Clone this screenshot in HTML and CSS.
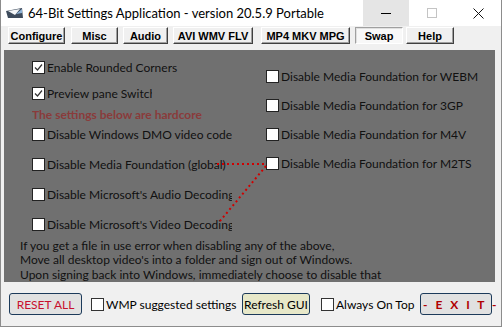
FILE: index.html
```html
<!DOCTYPE html>
<html lang="en">
<head>
    <meta charset="UTF-8">
    <title>64-Bit Settings Application</title>
    <link rel="stylesheet" href="styles.css">
</head>
<body>
    <div class="window">
        <!-- Title bar -->
        <div class="titlebar">
            <svg class="app-icon" width="18" height="12" viewBox="0 0 18 12">
                <polygon points="0,4 16,1 17,11 2,11" fill="#3d4b5c"/>
                <polygon points="2,4 14,2 9,8" fill="#f4f6f8"/>
                <polygon points="10,7 16,2 16,6" fill="#8fb4d8"/>
            </svg>
            <span class="title">64-Bit Settings Application - version 20.5.9 Portable</span>
            <div class="controls">
                <span class="ctl ctl-min"><svg width="10" height="10" viewBox="0 0 10 10"><line x1="0" y1="5.5" x2="10" y2="5.5" stroke="#000" stroke-width="1"/></svg></span>
                <span class="ctl"><svg width="10" height="10" viewBox="0 0 10 10"><rect x="0.5" y="0.5" width="9" height="9" fill="none" stroke="#c4c4c4" stroke-width="1"/></svg></span>
                <span class="ctl"><svg width="11" height="11" viewBox="0 0 11 11"><path d="M0.5 0.5 L10.5 10.5 M10.5 0.5 L0.5 10.5" stroke="#111" stroke-width="1"/></svg></span>
            </div>
        </div>

        <div class="client">
            <!-- Tab buttons -->
            <div class="tabs">
                <button class="tab tab-configure">Configure</button>
                <button class="tab tab-misc">Misc</button>
                <button class="tab tab-audio">Audio</button>
                <button class="tab tab-avi">AVI WMV FLV</button>
                <button class="tab tab-mp4">MP4 MKV MPG</button>
                <button class="tab tab-swap active">Swap</button>
                <button class="tab tab-help">Help</button>
            </div>

            <!-- Settings panel -->
            <div class="panel">
                <svg class="link-line" width="491" height="232" viewBox="0 0 491 232">
                    <path d="M213 114 L262 114 M262 116 L216 171" stroke="#d00000" stroke-width="2" stroke-dasharray="2 3" fill="none"/>
                </svg>
                <div class="cols">
                    <div class="col col-left">
                        <div class="row wide">
                            <span class="box"><svg width="11" height="11" viewBox="0 0 11 11"><path d="M2 5.5 L4.5 8 L9 2.5" stroke="#333" stroke-width="1.2" fill="none"/></svg></span>
                            <span class="label">Enable Rounded Corners</span>
                        </div>
                        <div class="row narrow near">
                            <span class="box"><svg width="11" height="11" viewBox="0 0 11 11"><path d="M2 5.5 L4.5 8 L9 2.5" stroke="#333" stroke-width="1.2" fill="none"/></svg></span>
                            <span class="label">Preview pane Switch</span>
                        </div>
                        <div class="row tight">
                            <span class="warn">The settings below are hardcore</span>
                        </div>
                        <div class="row wide flush">
                            <span class="box"></span>
                            <span class="label">Disable Windows DMO video codec</span>
                        </div>
                        <div class="row wide">
                            <span class="box"></span>
                            <span class="label">Disable Media Foundation (global)</span>
                        </div>
                        <div class="row wide">
                            <span class="box"></span>
                            <span class="label">Disable Microsoft's Audio Decoding</span>
                        </div>
                        <div class="row wide">
                            <span class="box"></span>
                            <span class="label">Disable Microsoft's Video Decoding</span>
                        </div>
                    </div>
                    <div class="col col-right">
                        <div class="row">
                            <span class="box"></span>
                            <span class="label">Disable Media Foundation for WEBM</span>
                        </div>
                        <div class="row">
                            <span class="box"></span>
                            <span class="label">Disable Media Foundation for 3GP</span>
                        </div>
                        <div class="row">
                            <span class="box"></span>
                            <span class="label">Disable Media Foundation for M4V</span>
                        </div>
                        <div class="row">
                            <span class="box"></span>
                            <span class="label">Disable Media Foundation for M2TS</span>
                        </div>
                    </div>
                </div>
                <div class="note">
                    <div>If you get a file in use error when disabling any of the above,</div>
                    <div>Move all desktop video's into a folder and sign out of Windows.</div>
                    <div>Upon signing back into Windows, immediately choose to disable that</div>
                </div>
            </div>

            <!-- Bottom bar -->
            <div class="footer">
                <button class="btn btn-reset">RESET ALL</button>
                <div class="check check-wmp">
                    <span class="box"></span>
                    <span class="label">WMP suggested settings</span>
                </div>
                <button class="btn btn-refresh">Refresh GUI</button>
                <div class="check check-top">
                    <span class="box"></span>
                    <span class="label">Always On Top</span>
                </div>
                <button class="btn btn-exit">- E X I T -</button>
            </div>
        </div>
    </div>
</body>
</html>
```

FILE: styles.css
```css
body {
    margin: 0;
    background-color: #f0f0f0;
    font-family: "Lato", "Open Sans", sans-serif;
    font-size: 12px;
    color: #000;
}
.window {
    width: 502px;
    height: 327px;
    box-sizing: border-box;
    border: 1px solid #8c8c8c;
    border-top: none;
    background-color: #f0f0f0;
    overflow: hidden;
}
/* Title bar */
.titlebar {
    display: flex;
    align-items: center;
    height: 26px;
    background-color: #fff;
}
.app-icon {
    margin-left: 5px;
    margin-right: 4px;
}
.title {
    font-size: 13px;
    color: #000;
}
.controls {
    display: flex;
    margin-left: auto;
    height: 100%;
}
.ctl {
    display: flex;
    align-items: center;
    justify-content: center;
    width: 46px;
    height: 100%;
}
.ctl-min {
    background-color: #e5e5e5;
}
/* Tabs */
.tabs {
    display: flex;
    padding: 1px 0 0 7px;
}
.tab {
    height: 17px;
    padding: 0;
    background-color: #f0f0f0;
    border: 1px solid;
    border-color: #fff #404040 #404040 #fff;
    box-shadow: inset -1px -1px #a0a0a0;
    font-family: "Liberation Sans", Arial, sans-serif;
    font-weight: bold;
    font-size: 11px;
    color: #000;
}
.tab.active {
    background-color: #f8f8f8;
    border-color: #a0a0a0 #fff #fff #a0a0a0;
    box-shadow: inset 1px 1px #e0e0e0;
}
.tab-configure { width: 57px; }
.tab-misc { width: 47px; margin-left: 6px; }
.tab-audio { width: 45px; margin-left: 5px; }
.tab-avi { width: 80px; margin-left: 5px; }
.tab-mp4 { width: 89px; margin-left: 8px; }
.tab-swap { width: 48px; margin-left: 5px; }
.tab-help { width: 48px; margin-left: 3px; }
/* Gray settings panel */
.panel {
    position: relative;
    width: 491px;
    height: 232px;
    margin: 6px 0 0 3px;
    padding: 7px 0 0 16px;
    box-sizing: border-box;
    background-color: #707070;
    color: #111;
    overflow: hidden;
}
.link-line {
    position: absolute;
    left: 0;
    top: 0;
}
.cols {
    display: flex;
    margin-left: 12px;
}
.col-left {
    width: 234px;
}
.col-right {
    padding-top: 9px;
}
.row {
    display: flex;
    align-items: center;
    height: 20px;
    margin-top: 10px;
    white-space: nowrap;
    overflow: hidden;
}
.col-left .row:first-child { margin-top: 0; }
.col-right .row { margin-top: 9px; }
.col-right .row:first-child { margin-top: 0; }
.row.near { margin-top: 6px; }
.row.tight { margin-top: 1px; }
.row.flush { margin-top: 0; }
.row.wide { width: 200px; }
.row.narrow { width: 120px; }
.box {
    display: inline-flex;
    align-items: center;
    justify-content: center;
    flex: none;
    width: 13px;
    height: 13px;
    box-sizing: border-box;
    border: 1px solid #222;
    background-color: #fff;
    margin-right: 2px;
}
.warn {
    font-weight: bold;
    color: #8a3b3b;
}
.note {
    margin-top: 5px;
    line-height: 14.3px;
    white-space: nowrap;
}
/* Bottom bar */
.footer {
    display: flex;
    align-items: center;
    margin-top: 11px;
    padding-left: 8px;
}
.btn {
    flex: none;
    height: 22px;
    padding: 0;
    border: 1px solid #1c3a5a;
    border-radius: 3px;
    background-color: #e1e1e1;
    font-family: "Lato", "Open Sans", sans-serif;
    font-size: 12px;
    color: #000;
    white-space: nowrap;
}
.btn-reset {
    width: 73px;
    color: #c8102e;
}
.btn-refresh {
    width: 68px;
    background-color: #e7e8c9;
}
.btn-exit {
    width: 72px;
    color: #b00000;
    font-weight: bold;
    letter-spacing: 2.5px;
    text-indent: 2px;
}
.check {
    display: flex;
    align-items: center;
    flex: none;
    white-space: nowrap;
    overflow: hidden;
}
.check .box {
    border-color: #333;
}
.check-wmp {
    width: 151px;
    margin-left: 9px;
}
.check-top {
    width: 94px;
    margin-left: 11px;
    margin-right: 5px;
}
```
